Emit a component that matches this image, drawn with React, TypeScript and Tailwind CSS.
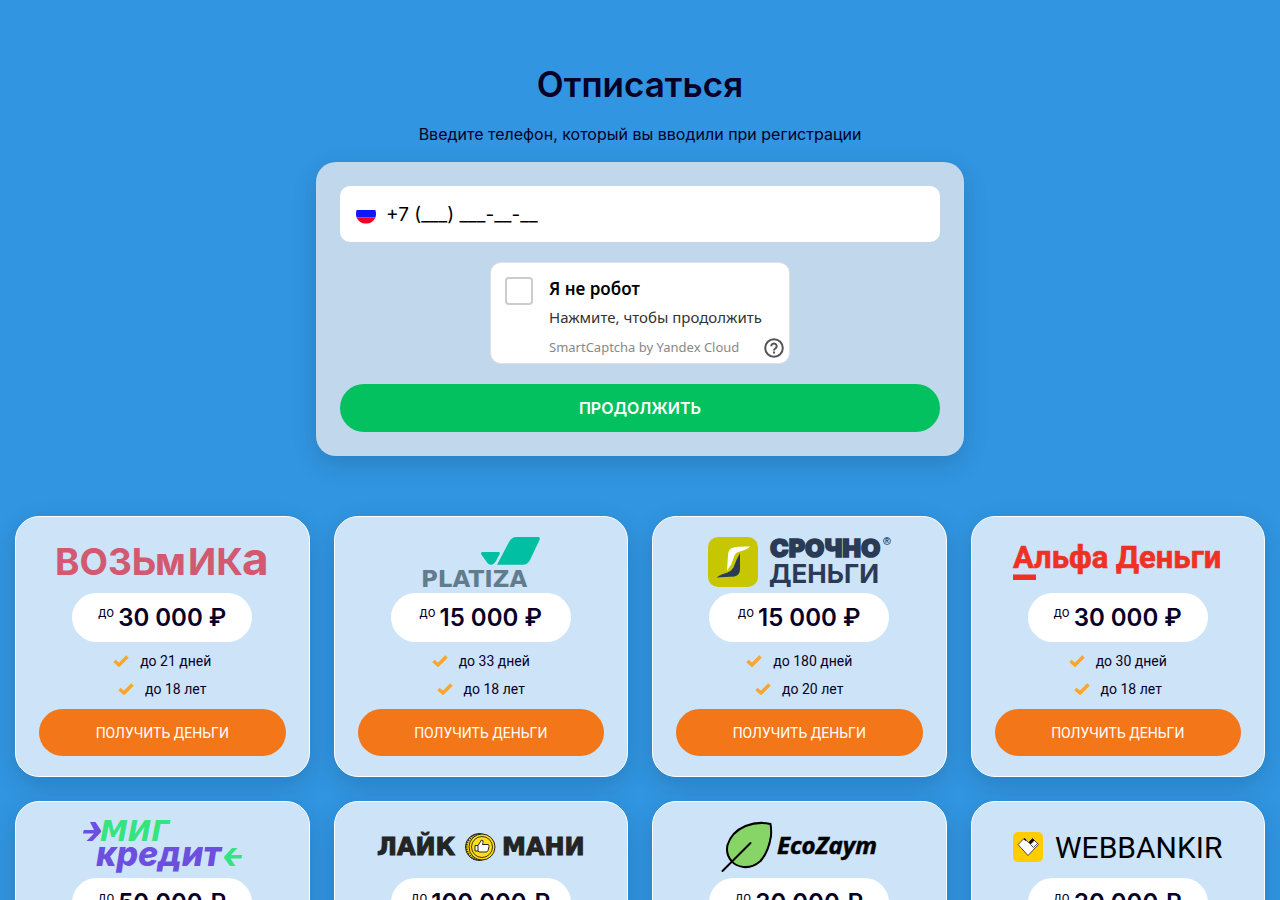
import { useState } from 'react';
import type { ReactNode } from 'react';

type Offer = {
  id: string;
  name: string;
  amount: string;
  days: string;
  age: string;
  logo: ReactNode;
};

function Logo({ label, children }: { label: string; children: ReactNode }) {
  return (
    <svg viewBox="0 0 210 50" className="w-[210px] h-[50px] overflow-visible" role="img" aria-label={label}>
      {children}
    </svg>
  );
}

const offers: Offer[] = [
  {
    id: 'vozmika',
    name: 'Возьмика',
    amount: '30 000 ₽',
    days: 'до 21 дней',
    age: 'до 18 лет',
    logo: (
      <g className="font-['Inter'] font-bold" fill="#d2596f">
        <text x="-2" y="38" fontSize="37">ВОЗЬ</text>
        <text x="98" y="38" fontSize="38">м</text>
        <text x="131" y="38" fontSize="37">ИК</text>
        <text x="185" y="38" fontSize="46">а</text>
      </g>
    ),
  },
  {
    id: 'platiza',
    name: 'Platiza',
    amount: '15 000 ₽',
    days: 'до 33 дней',
    age: 'до 18 лет',
    logo: (
      <>
        <path d="M140.500 0H162q2.600 0 1.500 3L154 23q-2.500 4.700-7 4.700H121L133 5q2.800-5 7.500-5Z" fill="#00bfa2" />
        <path d="M106.500 15H122.500q2 0 1.100 2L120 24q-2 3.700-5 3.700t-5-3.700L105.300 17.500q-.8-2.500 1.200-2.500Z" fill="#00bfa2" />
        <text x="45" y="50" fontSize="23" className="font-['DejaVu_Sans'] font-bold" fill="#617c8c">PLATIZA</text>
      </>
    ),
  },
  {
    id: 'srochno',
    name: 'Срочноденьги',
    amount: '15 000 ₽',
    days: 'до 180 дней',
    age: 'до 20 лет',
    logo: (
      <>
        <rect x="14" width="50" height="50" rx="10" fill="#c6c700" />
        <path d="M56 9.500Q45 9 39.500 10.500 34.500 11 34 18L33 34Q34.500 31 37 28L40.500 18.500Q41.500 15.500 45 14.700 54 12.500 56 9.500Z" fill="#fff" />
        <path d="M46 16V32Q46 38 40.500 39.500L22.500 40.500Q26 37.500 33 35.700 37.500 34 39.500 30.500 42.500 22 46 16Z" fill="#2b3a55" />
        <g className="font-['Inter']" fill="#2b3a55">
          <text x="76" y="20" fontSize="25" fontWeight="900" stroke="#2b3a55" strokeWidth="1.500">СРОЧНО</text>
          <text x="75" y="46" fontSize="26" fontWeight="700">ДЕНЬГИ</text>
          <text x="191" y="6" fontSize="6" fontWeight="600">R</text>
        </g>
        <circle cx="193" cy="4" r="3.500" fill="none" stroke="#2b3a55" strokeWidth=".8" />
      </>
    ),
  },
  {
    id: 'alfa',
    name: 'Альфа Деньги',
    amount: '30 000 ₽',
    days: 'до 30 дней',
    age: 'до 18 лет',
    logo: (
      <g fill="#ef3124">
        <text x="0" y="31" fontSize="31" className="font-['Roboto'] font-bold" stroke="#ef3124" strokeWidth=".6">Альфа Деньги</text>
        <rect y="37.500" width="23" height="5.500" />
      </g>
    ),
  },
  {
    id: 'migcredit',
    name: 'Миг кредит',
    amount: '50 000 ₽',
    days: 'до 30 дней',
    age: 'до 21 лет',
    logo: (
      <>
        <path d="M33 0h5.500l5.500 8.500q.5 1-.3 2L35.500 19h-6l7.500-7.500H26l.7-3.500H37Z" fill="#6d4fe0" />
        <text x="43" y="19" fontSize="28" className="font-['DejaVu_Sans'] font-bold italic" fill="#35e481">МИГ</text>
        <text x="39" y="44" fontSize="34" className="font-['Inter'] font-extrabold italic" fill="#6d4fe0">кредит</text>
        <path d="M180.500 26h-5.500l-7.500 8.300q-.8 1-.2 2L173 44h5.500l-5-7.500H184.500l.7-3.500H174Z" fill="#35e481" />
      </>
    ),
  },
  {
    id: 'likemoney',
    name: 'Лайк Мани',
    amount: '100 000 ₽',
    days: 'до 30 дней',
    age: 'до 18 лет',
    logo: (
      <>
        <g className="font-['DejaVu_Sans'] font-bold" fontSize="24" fill="#242424" stroke="#242424">
          <text x="1" y="33">ЛАЙК</text>
          <text x="126" y="33">МАНИ</text>
        </g>
        <circle cx="103" cy="25" r="13.500" fill="#ffde17" stroke="#242424" />
        <circle cx="103" cy="25" r="12.500" fill="none" stroke="#242424" strokeWidth="2" strokeDasharray="1.200 1.200" />
        <circle cx="106" cy="25" r="13" fill="#ffde17" stroke="#242424" />
        <circle cx="106" cy="25" r="10.500" fill="none" stroke="#242424" strokeWidth=".9" />
        <path d="M99 23.500h3l3.500-5.500q2 0 1.500 2.500l-.5 2h5.500q1.500.5 1 2l-1 4q-.5 1.500-2 1.500h-7l-1-1h-3Z" fill="#fff" stroke="#242424" />
        <path d="M102 23.500v5.500" stroke="#242424" />
      </>
    ),
  },
  {
    id: 'ecozaym',
    name: 'EcoZaym',
    amount: '30 000 ₽',
    days: 'до 30 дней',
    age: 'до 18 лет',
    logo: (
      <>
        <path d="M76.500 2Q77.500 7 77 14 74.500 30 66.500 39 58.500 46 49.500 45 41.500 44 37.500 39 31.500 32 33.500 23 37.500 10 51.500 4 64.500-1 76.500 2Z" fill="#86d566" stroke="#000" strokeWidth="2" />
        <path d="M28.500 49 56.500 21" stroke="#000" strokeWidth="2" strokeLinecap="round" />
        <text x="83" y="32" fontSize="24" className="font-['Open_Sans'] font-bold italic" stroke="#000" strokeWidth=".5">EcoZaym</text>
      </>
    ),
  },
  {
    id: 'webbankir',
    name: 'Webbankir',
    amount: '30 000 ₽',
    days: 'до 30 дней',
    age: 'до 18 лет',
    logo: (
      <>
        <rect y="10" width="30" height="30" rx="5" fill="#fc0" />
        <path d="M5 22.500 11 16.500 15.500 20.500 19.500 16.500 25.500 22.500 15 33.500Z" fill="#fff" stroke="#222" strokeWidth=".8" />
        <path d="M11 16.500 13 18.500" stroke="#111" strokeWidth="1.500" />
        <path d="M15.500 20.500 19.500 16.500 21.500 18.500 17.500 22.500Z" fill="#111" />
        <path d="M17.500 22.500 20.500 25.500 24.500 21.500" fill="none" stroke="#222" strokeWidth=".8" />
        <text x="42" y="36" fontSize="30" className="font-['Roboto']">WEBBANKIR</text>
      </>
    ),
  },
];

function CheckIcon() {
  return (
    <svg viewBox="0 0 16 12" className="w-4 h-3" fill="none" aria-hidden="true">
      <path d="M1.500 6 6 10 14.500 1.500" stroke="#fba52c" strokeWidth="3.400" />
    </svg>
  );
}

function FlagIcon() {
  return (
    <svg viewBox="0 0 20 20" className="w-5 h-5 shrink-0" aria-hidden="true">
      <path d="M.6 6h18.800q.6 2 .6 4 0 1.800-.6 3.500H.6Q0 11.800 0 10q0-2 .6-4Z" fill="#0a17ff" />
      <path d="M.6 13.500h18.800A10 10 0 0 1 10 19.500 10 10 0 0 1 .6 13.500Z" fill="#f00028" />
    </svg>
  );
}

function Captcha() {
  const [checked, setChecked] = useState(false);

  return (
    <div className="relative w-[300px] h-[102px] mx-auto flex gap-4 bg-white border border-[#e0e0e0] rounded-[11px] pl-3.5 pt-3.5 font-['Noto_Sans',sans-serif]">
      <input
        id="captcha"
        type="checkbox"
        checked={checked}
        onChange={e => setChecked(e.target.checked)}
        className="appearance-none w-7 h-7 shrink-0 bg-white border-2 border-[#ccc] rounded-[4px] checked:bg-[#5282ff]"
      />
      <div>
        <label htmlFor="captcha" className="block text-black">
          <span className="block text-[17px] leading-6 font-semibold">Я не робот</span>
          <span className="block mt-1 text-[15px] leading-6 text-[#333] whitespace-nowrap">Нажмите, чтобы продолжить</span>
        </label>
        <a href="#captcha" className="block mt-2 text-[13px] leading-5 text-[#888] whitespace-nowrap">SmartCaptcha by Yandex Cloud</a>
      </div>
      <button type="button" aria-label="Справка" className="absolute right-1 bottom-1">
        <svg viewBox="0 0 22 22" className="w-[22px] h-[22px]" fill="none" stroke="#555" strokeWidth="2">
          <circle cx="11" cy="11" r="8.800" />
          <path d="M8.300 9.200a2.700 2.700 0 1 1 4.200 2.200c-1 .7-1.500 1-1.500 2" />
          <path d="M11 14.600v1.900" />
        </svg>
      </button>
    </div>
  );
}

function OfferCard({ offer }: { offer: Offer }) {
  return (
    <article className="flex flex-col items-center bg-[#cce3f8] border border-white rounded-3xl px-[23px] py-5 shadow-[0_8px_24px_rgba(0,0,0,0.15)]">
      <Logo label={offer.name}>{offer.logo}</Logo>
      <div className="mt-1.5 w-[180px] h-[49px] flex items-center justify-center gap-1 bg-white rounded-full">
        <span className="text-[13px] leading-4 mb-3">до</span>
        <span className="text-2xl font-semibold whitespace-nowrap">{offer.amount}</span>
      </div>
      <ul className="mt-[5px] font-['Roboto',sans-serif] text-sm">
        {[offer.days, offer.age].map(line => (
          <li key={line} className="h-7 flex items-center justify-center gap-[11px]">
            <CheckIcon />
            {line}
          </li>
        ))}
      </ul>
      <a
        href={`#${offer.id}`}
        className="mt-1.5 w-full h-[47px] flex items-center justify-center bg-[#f37619] rounded-full text-white text-sm font-['Roboto',sans-serif]"
      >
        ПОЛУЧИТЬ ДЕНЬГИ
      </a>
    </article>
  );
}

export default function App() {
  const [phone, setPhone] = useState('+7 (___) ___-__-__');

  return (
    <div className="min-h-screen overflow-x-hidden bg-[#3195e1] text-[#080027] font-['Inter',sans-serif]">
      <main className="pt-15 pb-15">
        <section className="max-w-[648px] mx-auto">
          <h1 className="text-[35px] leading-12 font-semibold text-center">Отписаться</h1>
          <p className="mt-3.5 mb-4 text-base leading-6 text-center">Введите телефон, который вы вводили при регистрации</p>
          <form
            onSubmit={e => e.preventDefault()}
            className="bg-[#c1d8ec] rounded-[20px] p-6 shadow-[0_8px_24px_rgba(0,0,0,0.15)]"
          >
            <label className="h-14 mb-5 px-4 flex items-center gap-2.5 bg-white rounded-[10px]">
              <FlagIcon />
              <input
                type="tel"
                aria-label="Телефон"
                value={phone}
                onChange={e => setPhone(e.target.value)}
                className="w-full pt-0.5 text-[19px] text-black outline-none"
              />
            </label>
            <Captcha />
            <button type="submit" className="mt-5 w-full h-12 bg-[#03c15e] rounded-full text-white text-base font-semibold">
              ПРОДОЛЖИТЬ
            </button>
          </form>
        </section>

        <section className="mt-15 px-[15px] grid grid-cols-1 sm:grid-cols-2 lg:grid-cols-4 gap-6">
          {offers.map(offer => (
            <OfferCard key={offer.id} offer={offer} />
          ))}
        </section>
      </main>
    </div>
  );
}
